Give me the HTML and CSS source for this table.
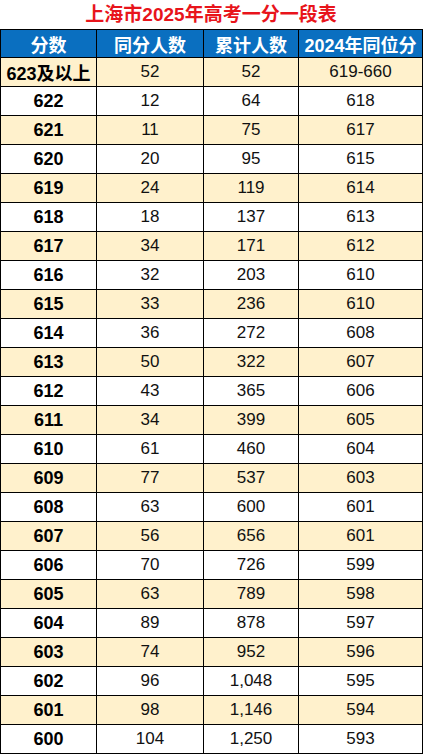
FILE: index.html
```html
<!DOCTYPE html>
<html lang="zh-CN">
<head>
<meta charset="utf-8">
<title>上海市2025年高考一分一段表</title>
<link rel="stylesheet" href="styles.css">
</head>
<body>
<div class="sheet">
  <div class="title">上海市2025年高考一分一段表</div>
  <table class="grid">
    <colgroup>
      <col class="c1"><col class="c2"><col class="c3"><col class="c4">
    </colgroup>
    <thead>
      <tr><th>分数</th><th>同分人数</th><th>累计人数</th><th>2024年同位分</th></tr>
    </thead>
    <tbody>
      <tr class="alt"><td class="score">623及以上</td><td>52</td><td>52</td><td>619-660</td></tr>
      <tr><td class="score">622</td><td>12</td><td>64</td><td>618</td></tr>
      <tr class="alt"><td class="score">621</td><td>11</td><td>75</td><td>617</td></tr>
      <tr><td class="score">620</td><td>20</td><td>95</td><td>615</td></tr>
      <tr class="alt"><td class="score">619</td><td>24</td><td>119</td><td>614</td></tr>
      <tr><td class="score">618</td><td>18</td><td>137</td><td>613</td></tr>
      <tr class="alt"><td class="score">617</td><td>34</td><td>171</td><td>612</td></tr>
      <tr><td class="score">616</td><td>32</td><td>203</td><td>610</td></tr>
      <tr class="alt"><td class="score">615</td><td>33</td><td>236</td><td>610</td></tr>
      <tr><td class="score">614</td><td>36</td><td>272</td><td>608</td></tr>
      <tr class="alt"><td class="score">613</td><td>50</td><td>322</td><td>607</td></tr>
      <tr><td class="score">612</td><td>43</td><td>365</td><td>606</td></tr>
      <tr class="alt"><td class="score">611</td><td>34</td><td>399</td><td>605</td></tr>
      <tr><td class="score">610</td><td>61</td><td>460</td><td>604</td></tr>
      <tr class="alt"><td class="score">609</td><td>77</td><td>537</td><td>603</td></tr>
      <tr><td class="score">608</td><td>63</td><td>600</td><td>601</td></tr>
      <tr class="alt"><td class="score">607</td><td>56</td><td>656</td><td>601</td></tr>
      <tr><td class="score">606</td><td>70</td><td>726</td><td>599</td></tr>
      <tr class="alt"><td class="score">605</td><td>63</td><td>789</td><td>598</td></tr>
      <tr><td class="score">604</td><td>89</td><td>878</td><td>597</td></tr>
      <tr class="alt"><td class="score">603</td><td>74</td><td>952</td><td>596</td></tr>
      <tr><td class="score">602</td><td>96</td><td>1,048</td><td>595</td></tr>
      <tr class="alt"><td class="score">601</td><td>98</td><td>1,146</td><td>594</td></tr>
      <tr><td class="score">600</td><td>104</td><td>1,250</td><td>593</td></tr>
    </tbody>
  </table>
</div>
</body>
</html>
```
FILE: styles.css
```css
html, body {
  margin: 0;
  padding: 0;
  background: #ffffff;
}
.sheet {
  width: 424px;
  font-family: "Liberation Sans", "Noto Sans CJK SC", sans-serif;
}
.title {
  height: 29px;
  line-height: 29px;
  text-align: center;
  color: #e8141b;
  font-weight: bold;
  font-size: 19px;
  padding-right: 2px;
}
.grid {
  border-collapse: collapse;
  table-layout: fixed;
  width: 422px;
}
.c1 { width: 96px; }
.c2 { width: 107px; }
.c3 { width: 95px; }
.c4 { width: 124px; }
.grid th,
.grid td {
  border: 1px solid #000;
  padding: 0;
  text-align: center;
  white-space: nowrap;
  overflow: hidden;
}
.grid th {
  height: 27px;
  background: #0a6fc0;
  color: #ffffff;
  font-size: 18px;
  font-weight: bold;
}
.grid td {
  height: 28px;
  font-size: 17px;
  color: #111;
}
.grid tr.alt td {
  background: #fff1cc;
}
.grid td.score {
  font-weight: bold;
  font-size: 18px;
  color: #000;
}
```
